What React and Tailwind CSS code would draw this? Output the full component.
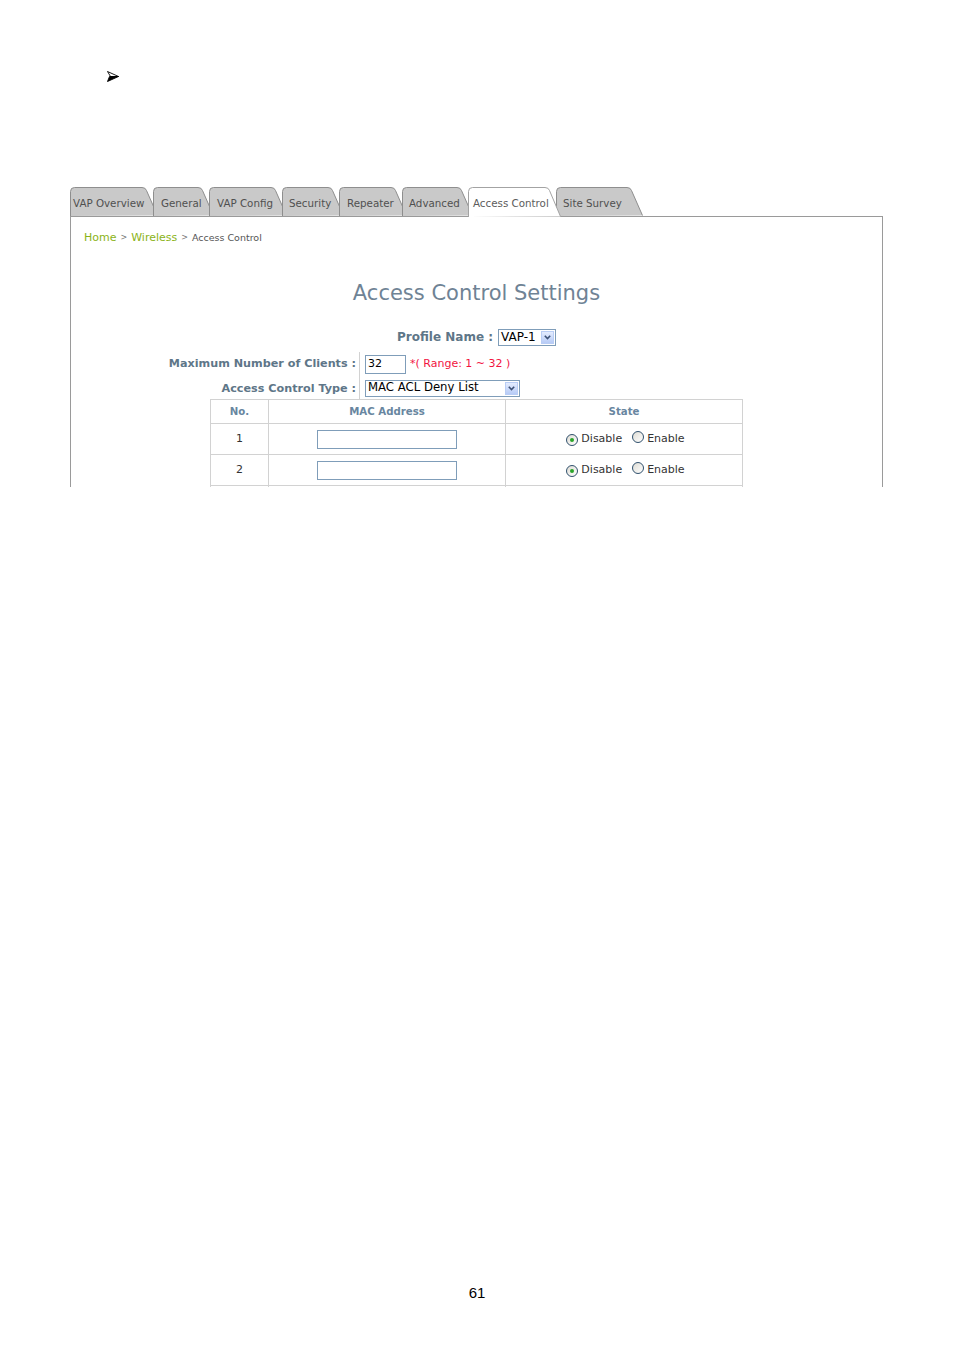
import React from 'react'

const tabs = [
  { label: 'VAP Overview', w: 83, cls: 'w-[83px] pl-[3px]' },
  { label: 'General', w: 56, cls: 'w-[56px] pl-[8px]' },
  { label: 'VAP Config', w: 73, cls: 'w-[73px] pl-[8px]' },
  { label: 'Security', w: 57, cls: 'w-[57px] pl-[7px]' },
  { label: 'Repeater', w: 63, cls: 'w-[63px] pl-[8px]' },
  { label: 'Advanced', w: 66, cls: 'w-[66px] pl-[7px]' },
  { label: 'Access Control', w: 88, cls: 'w-[88px] pl-[5px]', active: true },
  { label: 'Site Survey', w: 82, cls: 'w-[82px] pl-[7px]' },
]

function Tab({ tab }) {
  const sw = tab.w + 5
  const h = tab.active ? 30 : 29
  const outline = `M0.5,${h} V4.5 Q0.5,0.5 4.5,0.5 H${sw - 16} Q${sw - 12.5},0.5 ${sw - 11.5},3.5 L${sw - 0.5},${h - 0.5}`
  return (
    <div className={`relative h-[29px] shrink-0 ${tab.cls} ${tab.active ? 'z-10' : ''}`}>
      <svg className="absolute left-0 top-0 overflow-visible" width={sw} height={h}>
        <path d={`${outline} Z`} fill={tab.active ? '#ffffff' : '#c9c9c9'} stroke="none" />
        <path d={outline} fill="none" stroke={tab.active ? '#a3a3a3' : '#8e8e8e'} strokeWidth="1" />
      </svg>
      <span className={`relative flex h-full items-center whitespace-nowrap pt-[5px] text-[10.3px] ${tab.active ? 'text-[#5c5c5c]' : 'text-[#505050]'}`}>
        {tab.label}
      </span>
    </div>
  )
}

function Chevron() {
  return (
    <svg width="7" height="5" viewBox="0 0 7 5">
      <path d="M0.8 0.8 L3.5 3.6 L6.2 0.8" stroke="#3d5175" strokeWidth="1.6" fill="none" />
    </svg>
  )
}

function Select({ value, cls }) {
  return (
    <div className={`flex h-[17px] items-center border border-[#7f9db9] bg-white ${cls}`}>
      <span className="flex-1 whitespace-nowrap pl-[2px] leading-none text-black">{value}</span>
      <span className="mr-[1px] flex h-[13px] w-[13px] items-center justify-center border border-[#b9cdf5] bg-gradient-to-b from-[#e4ecfe] to-[#b7cbf6]">
        <Chevron />
      </span>
    </div>
  )
}

function Radio({ checked }) {
  return (
    <span className="inline-flex h-[12px] w-[12px] shrink-0 items-center justify-center rounded-full border border-[#31516e] bg-gradient-to-br from-[#dedcd4] to-white">
      {checked && <span className="h-[4px] w-[4px] rounded-full bg-[#2aa52a]" />}
    </span>
  )
}

function MacRow({ no }) {
  return (
    <tr className="h-[31px]">
      <td className="border border-[#d2d2d2] pt-[1px] text-center text-[11px] text-[#333]">{no}</td>
      <td className="border border-[#d2d2d2] text-center">
        <div className="mx-auto h-[19px] w-[140px] border border-[#7f9db9] bg-white" />
      </td>
      <td className="border border-[#d2d2d2]">
        <div className="flex items-center justify-center pl-[3px] pt-[1px] text-[11px] text-[#333]">
          <Radio checked />
          <span className="ml-[3px]">Disable</span>
          <span className="ml-[10px]"><Radio /></span>
          <span className="ml-[3px]">Enable</span>
        </div>
      </td>
    </tr>
  )
}

export default function App() {
  return (
    <div className="h-[1351px] w-[954px] bg-white font-['DejaVu_Sans',sans-serif]">
      <div className="flex h-[85px] items-start pl-[107px] pt-[71px]">
        <svg width="12" height="11" viewBox="0 0 12 11">
          <path d="M0.5 0.5 L11.5 5.5 L3.5 5.5 Z" fill="#fff" stroke="#000" strokeWidth="0.9" strokeLinejoin="round" />
          <path d="M11.5 5.5 L0.5 10.5 L2.5 5.5 Z" fill="#000" stroke="#000" strokeWidth="0.9" strokeLinejoin="round" />
        </svg>
      </div>

      <div className="ml-[70px] mt-[102px] h-[300px] w-[813px] overflow-hidden">
        <div className="relative z-10 flex h-[29px]">
          {tabs.map((t) => (
            <Tab key={t.label} tab={t} />
          ))}
        </div>

        <div className="h-[300px] border-x border-t border-[#9a9a9a]">
          <div className="flex items-center pl-[13px] pt-[13px] leading-[16px]">
            <span className="text-[11px] text-[#8bb317]">Home</span>
            <span className="mx-[4px] text-[8px] text-[#777]">&gt;</span>
            <span className="text-[11px] text-[#8bb317]">Wireless</span>
            <span className="mx-[4px] text-[8px] text-[#777]">&gt;</span>
            <span className="text-[9.5px] text-[#555]">Access Control</span>
          </div>

          <h1 className="mt-[33px] text-center text-[21px] leading-[28px] text-[#6f8395]">Access Control Settings</h1>

          <div className="mt-[22px] flex h-[16px] items-center justify-center gap-[5px]">
            <span className="text-[12px] font-bold text-[#5e7688]">Profile Name :</span>
            <Select value="VAP-1" cls="w-[58px] text-[12px]" />
          </div>

          <div className="mt-[7px] flex">
            <div className="w-[289px] border-r border-[#d2d2d2] pr-[3px] text-right text-[11.2px] font-bold text-[#5e7688]">
              <div className="flex h-[24px] items-center justify-end pt-[1px]">Maximum Number of Clients :</div>
              <div className="flex h-[23px] items-center justify-end pt-[3px]">Access Control Type :</div>
            </div>
            <div className="pl-[5px]">
              <div className="flex h-[24px] items-center">
                <div className="flex h-[19px] w-[41px] items-center border border-[#7f9db9] pl-[2px] pt-[1px] text-[11px] text-black">32</div>
                <span className="ml-[4px] pt-[1px] text-[11px] text-[#f2143f]">*( Range: 1 ~ 32 )</span>
              </div>
              <div className="flex h-[23px] items-center pt-[1px]">
                <Select value="MAC ACL Deny List" cls="w-[155px] text-[11.7px]" />
              </div>
            </div>
          </div>

          <table className="mx-auto w-[533px] border-collapse">
            <thead>
              <tr className="h-[24px] text-[10.2px] font-bold text-[#6886a0]">
                <th className="w-[58px] border border-[#d2d2d2] pt-[1px]">No.</th>
                <th className="w-[237px] border border-[#d2d2d2] pt-[1px]">MAC Address</th>
                <th className="border border-[#d2d2d2] pt-[1px]">State</th>
              </tr>
            </thead>
            <tbody>
              <MacRow no={1} />
              <MacRow no={2} />
              <tr className="h-[31px]">
                <td className="border border-[#d2d2d2]" />
                <td className="border border-[#d2d2d2]" />
                <td className="border border-[#d2d2d2]" />
              </tr>
            </tbody>
          </table>
        </div>
      </div>

      <div className="mt-[796px] text-center font-['Liberation_Sans',sans-serif] text-[15px] leading-[20px] text-black">61</div>
    </div>
  )
}
